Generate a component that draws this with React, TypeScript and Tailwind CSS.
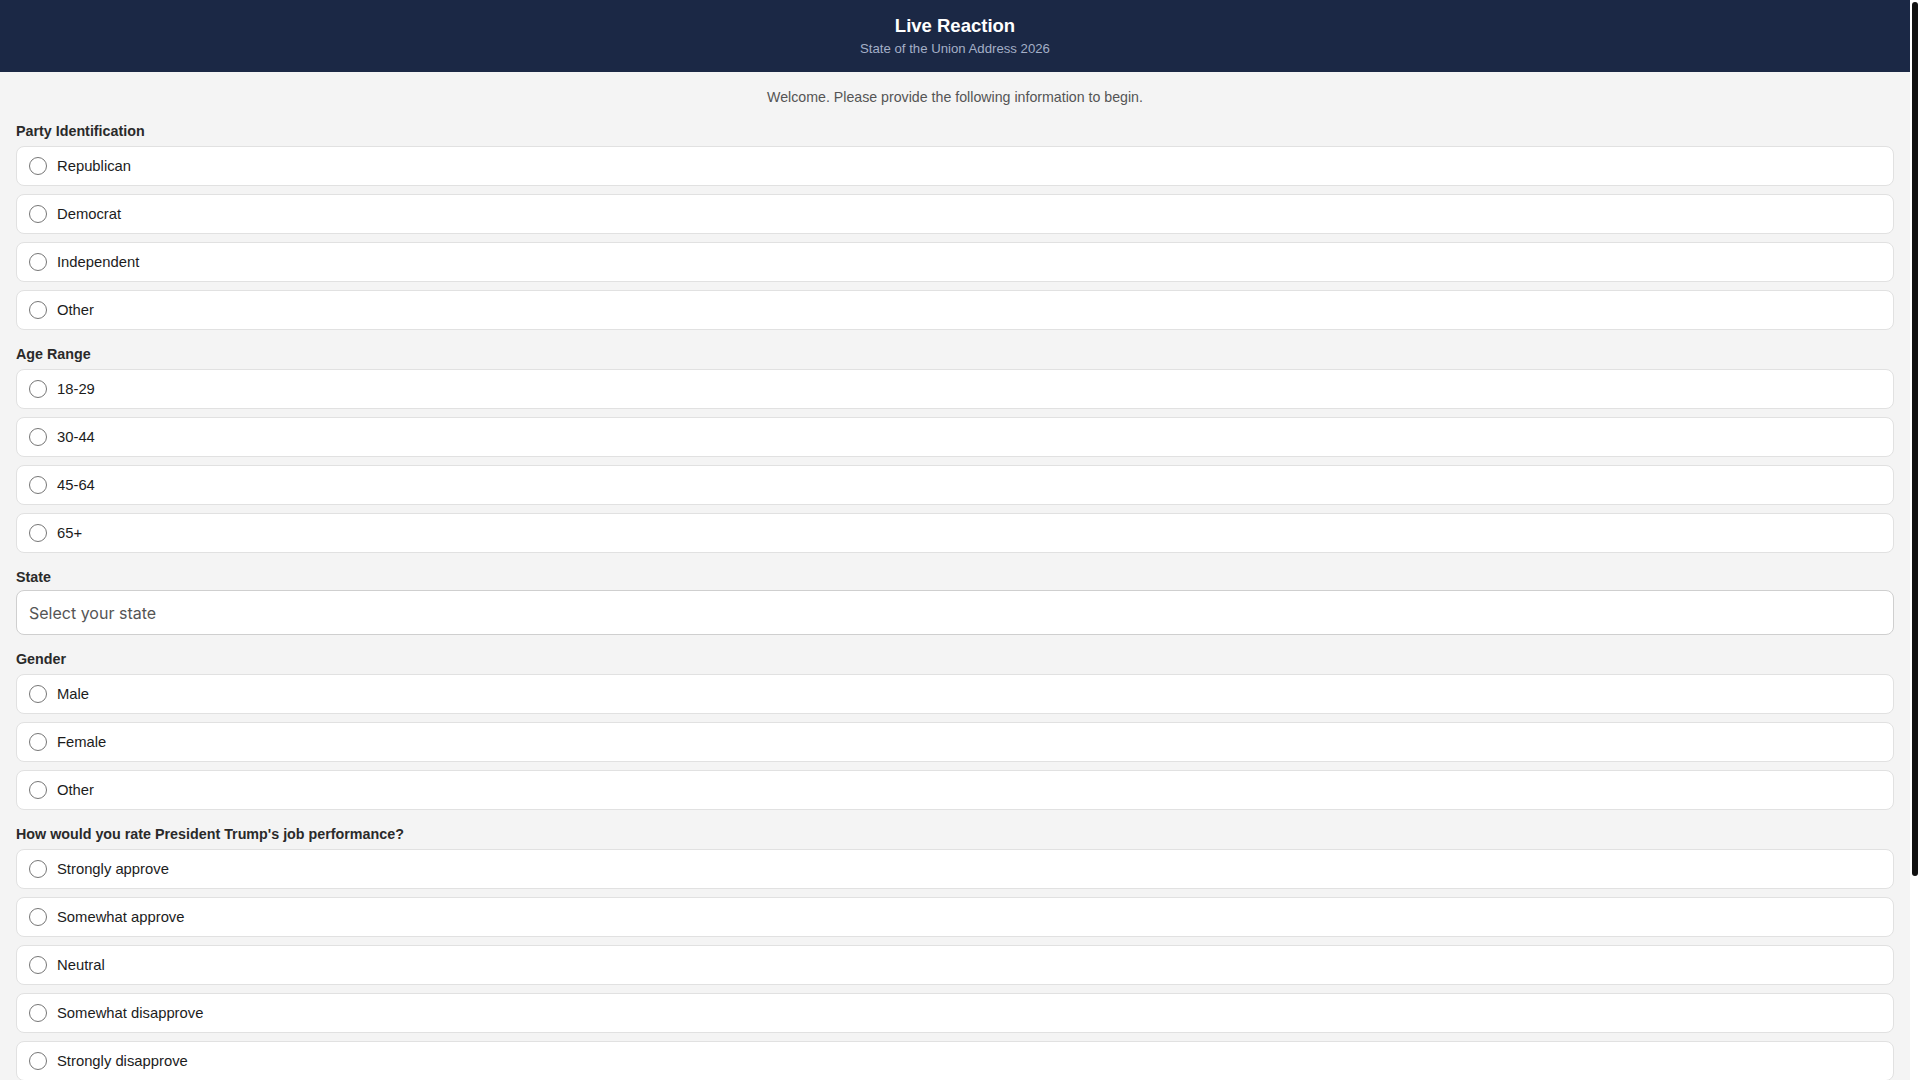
import React from 'react';

const sections: { label: string; options: string[] }[] = [
  { label: 'Party Identification', options: ['Republican', 'Democrat', 'Independent', 'Other'] },
  { label: 'Age Range', options: ['18-29', '30-44', '45-64', '65+'] },
];

const afterState: { label: string; options: string[] }[] = [
  { label: 'Gender', options: ['Male', 'Female', 'Other'] },
  {
    label: "How would you rate President Trump's job performance?",
    options: ['Strongly approve', 'Somewhat approve', 'Neutral', 'Somewhat disapprove', 'Strongly disapprove'],
  },
];

const RadioGroup: React.FC<{ name: string; label: string; options: string[] }> = ({ name, label, options }) => (
  <div className="mt-4">
    <div className="text-[14.3px] leading-[17px] font-bold text-[#2a2a2a] mb-[6px]">{label}</div>
    <div className="flex flex-col gap-2">
      {options.map((opt) => (
        <label
          key={opt}
          className="flex items-center gap-[10px] h-10 px-3 bg-white border border-[#e1e1e1] rounded-lg cursor-pointer"
        >
          <input type="radio" name={name} className="w-[18px] h-[18px] m-0 shrink-0" />
          <span className="mt-[1px] text-[14.8px] text-[#1c1c1c]">{opt}</span>
        </label>
      ))}
    </div>
  </div>
);

const App: React.FC = () => {
  return (
    <div className="flex h-screen overflow-hidden bg-white font-['Liberation_Sans',Arial,sans-serif]">
      {/* Page */}
      <div className="flex-1 min-w-0 overflow-hidden bg-[#f4f4f4]">
        {/* Header */}
        <header className="bg-[#1b2845] pt-[15px] pb-[15px] text-center">
          <h1 className="text-[18.5px] leading-[22px] font-bold text-white">Live Reaction</h1>
          <p className="mt-1 text-[13.2px] leading-[16px] text-[#a4afc7]">State of the Union Address 2026</p>
        </header>

        <main className="px-4 pt-[15px] pb-[250px]">
          <p className="text-center text-[14.2px] leading-5 text-[#555]">
            Welcome. Please provide the following information to begin.
          </p>

          {sections.map((s) => (
            <RadioGroup key={s.label} name={s.label} label={s.label} options={s.options} />
          ))}

          <div className="mt-4">
            <div className="text-[14.3px] leading-[17px] font-bold text-[#2a2a2a] mb-[4px]">State</div>
            <div className="flex items-center h-[45px] px-3 bg-white border border-[#cfcfcf] rounded-lg">
              <span className="font-['Inter',sans-serif] text-[16px] text-[#555]">Select your state</span>
            </div>
          </div>

          {afterState.map((s) => (
            <RadioGroup key={s.label} name={s.label} label={s.label} options={s.options} />
          ))}
        </main>
      </div>

      {/* Scrollbar */}
      <div className="w-[10px] shrink-0 bg-white pt-[2px] px-[2px]">
        <div className="h-[874px] w-[6px] rounded-full bg-[#111]" />
      </div>
    </div>
  );
};

export default App;
